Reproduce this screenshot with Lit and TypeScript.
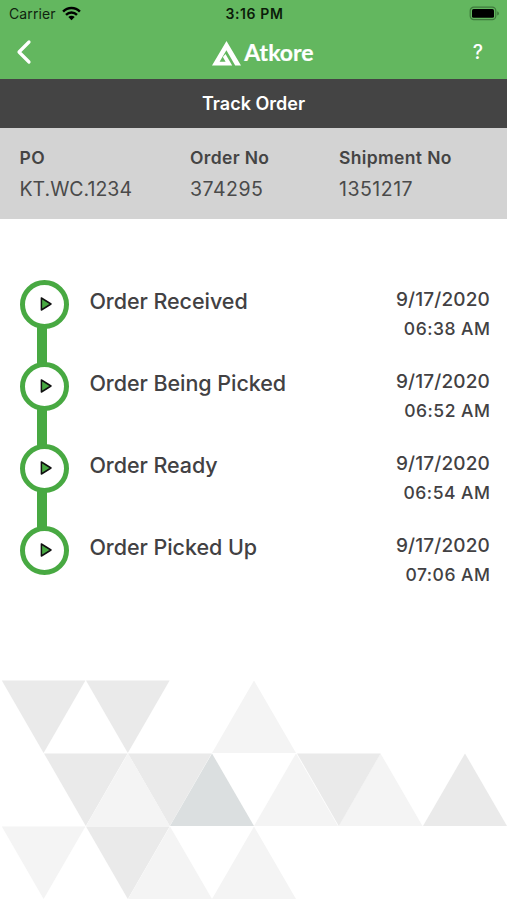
import { LitElement, html, css, svg } from "lit";
import { customElement, property } from "lit/decorators.js";

const STEPS = [
  { title: "Order Received", date: "9/17/2020", time: "06:38 AM" },
  { title: "Order Being Picked", date: "9/17/2020", time: "06:52 AM" },
  { title: "Order Ready", date: "9/17/2020", time: "06:54 AM" },
  { title: "Order Picked Up", date: "9/17/2020", time: "07:06 AM" },
];

@customElement("status-bar")
class StatusBar extends LitElement {
  static styles = css`
    :host { display: grid; grid-template-columns: 1fr auto 1fr; align-items: center; height: 27px; padding: 0 7px 0 9px; color: #10240f; }
    .left { display: flex; align-items: center; gap: 6px; font-size: 14px; letter-spacing: 0.1px; }
    .time { font-size: 14px; font-weight: 600; letter-spacing: 0.6px; color: #0b1c0a; }
    .battery { justify-self: end; display: block; }
    svg { display: block; }
  `;
  render() {
    return html`
      <div class="left">
        <span>Carrier</span>
        <svg width="19" height="15" viewBox="0 0 19 15">
          <g fill="none" stroke="#000" stroke-width="2.5">
            <path d="M1.1 5.6 C5.8 .9 13.2 .9 17.9 5.6" />
            <path d="M4 8.8 C7.2 5.8 11.8 5.8 15 8.8" />
          </g>
          <path fill="#000" d="M6.3 11 C8.2 9.3 10.8 9.3 12.7 11 L9.5 14.2 Z" />
        </svg>
      </div>
      <div class="time">3:16 PM</div>
      <svg class="battery" width="31" height="15" viewBox="0 0 31 15">
        <rect x="1.2" y="1.2" width="25.6" height="12.4" rx="3.6" fill="none" stroke="#3f7a3c" stroke-width="1.2" />
        <rect x="3" y="3" width="22" height="8.8" rx="1.6" fill="#000" />
        <path d="M28.2 5.2 Q30 6 30 7.4 T28.2 9.6 Z" fill="#3f7a3c" />
      </svg>
    `;
  }
}

@customElement("nav-bar")
class NavBar extends LitElement {
  static styles = css`
    :host { display: grid; grid-template-columns: 1fr auto 1fr; align-items: center; height: 52px; box-sizing: border-box; padding: 0 24px 2px 16px; color: #fff; }
    svg { display: block; }
    .brand { display: flex; align-items: flex-end; gap: 3px; padding-left: 20px; margin-right: -7px; }
    .name { font: 700 23px/27px Lato, sans-serif; letter-spacing: 0; -webkit-text-stroke: 0.2px #fff; }
    .help { justify-self: end; font-size: 19.5px; font-weight: 500; }
  `;
  render() {
    return html`
      <svg width="16" height="26" viewBox="0 0 16 26">
        <path d="M13 3 L3 13 L13 23" fill="none" stroke="#fff" stroke-width="3.2" stroke-linecap="round" stroke-linejoin="round" />
      </svg>
      <div class="brand">
        <svg width="29" height="25" viewBox="0 0 29 25">
          <path fill="#fff" d="M14.5 0 L29 24.5 H23.2 L14.4 9.2 L7.6 20.7 H13.6 L10.9 15.9 L13.5 13 L20.2 24.5 H0 Z" />
        </svg>
        <span class="name">Atkore</span>
      </div>
      <span class="help">?</span>
    `;
  }
}

@customElement("order-field")
class OrderField extends LitElement {
  @property() label = "";
  @property() value = "";
  @property({ type: Boolean, reflect: true }) numeric = false;
  static styles = css`
    :host { display: flex; flex-direction: column; color: #444; }
    .label { font-size: 17.5px; line-height: 30px; font-weight: 600; letter-spacing: 0.35px; }
    .value { font-size: 19.5px; line-height: 32px; color: #4a4a4a; }
    :host([numeric]) .value { letter-spacing: 0.5px; }
  `;
  render() {
    return html`<span class="label">${this.label}</span><span class="value">${this.value}</span>`;
  }
}

@customElement("track-step")
class TrackStep extends LitElement {
  @property() heading = "";
  @property() date = "";
  @property() time = "";
  @property({ type: Boolean, reflect: true }) last = false;
  static styles = css`
    :host { display: grid; grid-template-columns: 49px 1fr auto; column-gap: 20px; height: 82px; color: #424143; }
    .rail { display: flex; flex-direction: column; }
    .dot { box-sizing: border-box; width: 49px; height: 49px; flex: none; border: 5px solid #48a942; border-radius: 50%; display: flex; align-items: center; justify-content: center; }
    .line { width: 10px; height: 37px; flex: none; margin: -2px 0 -2px 16.6px; background: #48a942; }
    :host([last]) .line { display: none; }
    svg { display: block; margin-left: 3px; }
    .title { font-size: 21.5px; line-height: 30px; font-weight: 500; padding-top: 6px; letter-spacing: -0.05px; }
    .when { display: flex; flex-direction: column; align-items: flex-end; padding-top: 5px; font-weight: 500; }
    .date { font-size: 19px; line-height: 29px; letter-spacing: 0.15px; }
    .time { font-size: 17.5px; line-height: 30px; letter-spacing: 0.5px; margin-right: -0.5px; }
  `;
  render() {
    return html`
      <div class="rail">
        <div class="dot">
          <svg width="13" height="16" viewBox="0 0 13 16">
            <path d="M1.4 2 V14 L11 8 Z" fill="#48a942" stroke="#111" stroke-width="1.5" stroke-linejoin="round" />
          </svg>
        </div>
        <div class="line"></div>
      </div>
      <div class="title">${this.heading}</div>
      <div class="when"><span class="date">${this.date}</span><span class="time">${this.time}</span></div>
    `;
  }
}

@customElement("triangle-pattern")
class TrianglePattern extends LitElement {
  static styles = css`
    :host { display: block; }
    svg { display: block; }
  `;
  render() {
    const up = (x: number, y: number, fill: string) =>
      svg`<path d="M${x} ${y + 72.6} h84 l-42 -72.6 z" fill=${fill} />`;
    const down = (x: number, y: number, fill: string) =>
      svg`<path d="M${x} ${y} h83.6 l-41.8 72.6 z" fill=${fill} />`;
    const mid = "#eaeaea", light = "#f4f4f4", dark = "#dbdfe0";
    return html`
      <svg width="507" height="220" viewBox="0 0 507 220">
        ${down(1.8, 0.5, mid)} ${down(86, 0.5, mid)} ${up(212, 0.5, light)}
        ${down(44, 73.4, mid)} ${down(128, 73.4, mid)} ${up(86, 73.4, light)} ${up(170, 73.4, dark)}
        ${up(254, 73.4, light)} ${up(338.5, 73.4, light)} ${down(297, 73.4, mid)} ${up(423, 73.4, mid)}
        ${down(1.8, 146.4, light)} ${down(86, 146.4, mid)} ${up(128, 146.4, light)} ${up(212, 146.4, light)}
      </svg>
    `;
  }
}

@customElement("app-root")
class AppRoot extends LitElement {
  static styles = css`
    :host { display: flex; flex-direction: column; height: 900px; overflow: hidden; background: #fff; font-family: Inter, "Liberation Sans", sans-serif; }
    .top { background: #63b75f; }
    .heading { height: 49px; line-height: 49px; text-align: center; background: #444; color: #fff; font-size: 18px; font-weight: 600; }
    .info { box-sizing: border-box; display: grid; grid-template-columns: 170.5px 149px 1fr; height: 91px; padding: 15px 0 0 19.5px; background: #d3d3d3; }
    .steps { display: flex; flex-direction: column; padding: 60.5px 17px 0 20.4px; }
    .pattern { margin-top: auto; }
  `;
  render() {
    return html`
      <div class="top"><status-bar></status-bar><nav-bar></nav-bar></div>
      <div class="heading">Track Order</div>
      <div class="info">
        <order-field label="PO" value="KT.WC.1234"></order-field>
        <order-field label="Order No" value="374295" numeric></order-field>
        <order-field label="Shipment No" value="1351217" numeric></order-field>
      </div>
      <div class="steps">
        ${STEPS.map((s, i) => html`<track-step .heading=${s.title} .date=${s.date} .time=${s.time} ?last=${i === STEPS.length - 1}></track-step>`)}
      </div>
      <triangle-pattern class="pattern"></triangle-pattern>
    `;
  }
}
